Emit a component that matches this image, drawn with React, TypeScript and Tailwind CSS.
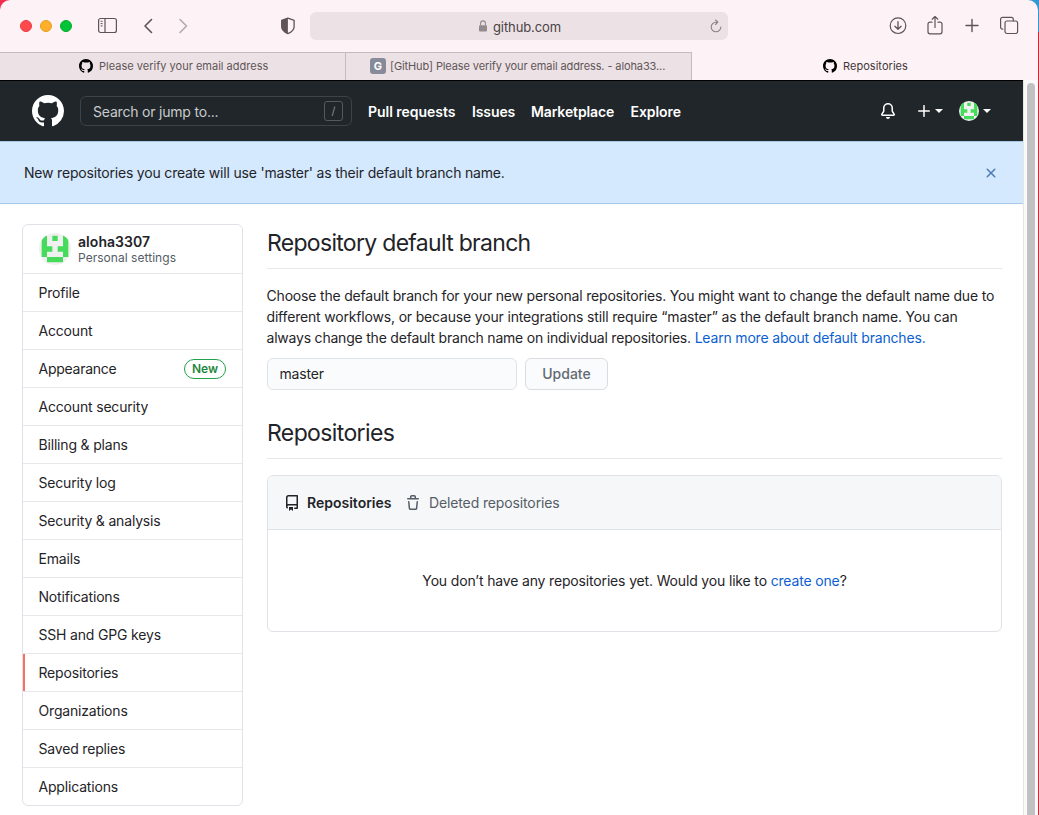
import React from "react";

const MARK =
  "M8 0C3.58 0 0 3.58 0 8c0 3.54 2.29 6.53 5.47 7.59.4.07.55-.17.55-.38 0-.19-.01-.82-.01-1.49-2.01.37-2.53-.49-2.69-.94-.09-.23-.48-.94-.82-1.13-.28-.15-.68-.52-.01-.53.63-.01 1.08.58 1.23.82.72 1.21 1.87.87 2.33.66.07-.52.28-.87.51-1.07-1.78-.2-3.64-.89-3.64-3.95 0-.87.31-1.59.82-2.15-.08-.2-.36-1.02.08-2.12 0 0 .67-.21 2.2.82.64-.18 1.32-.27 2-.27.68 0 1.36.09 2 .27 1.53-1.04 2.2-.82 2.2-.82.44 1.1.16 1.92.08 2.12.51.56.82 1.27.82 2.15 0 3.07-1.87 3.75-3.65 3.95.29.25.54.73.54 1.48 0 1.07-.01 1.93-.01 2.2 0 .21.15.46.55.38A8.013 8.013 0 0016 8c0-4.42-3.58-8-8-8z";
const BELL =
  "M8 16a2 2 0 001.985-1.75c.017-.137-.097-.25-.235-.25h-3.5c-.138 0-.252.113-.235.25A2 2 0 008 16zM8 1.5A3.5 3.5 0 004.5 5v2.947c0 .346-.102.683-.294.97l-1.703 2.556a.018.018 0 00-.003.01l.001.006c0 .002.002.004.004.006a.017.017 0 00.006.004l.007.001h10.964l.007-.001a.016.016 0 00.006-.004.016.016 0 00.004-.006l.001-.007a.017.017 0 00-.003-.01l-1.703-2.554a1.75 1.75 0 01-.294-.97V5A3.5 3.5 0 008 1.5zM3 5a5 5 0 0110 0v2.947c0 .05.015.098.042.139l1.703 2.555A1.518 1.518 0 0113.482 13H2.518a1.518 1.518 0 01-1.263-2.36l1.703-2.554A.25.25 0 003 7.947V5z";
const REPO =
  "M2 2.5A2.5 2.5 0 014.5 0h8.75a.75.75 0 01.75.75v12.5a.75.75 0 01-.75.75h-2.5a.75.75 0 110-1.5h1.75v-2h-8a1 1 0 00-.714 1.7.75.75 0 01-1.072 1.05A2.495 2.495 0 012 11.5v-9zm10.5-1V9h-8c-.356 0-.694.074-1 .208V2.5a1 1 0 011-1h8zM5 12.25v3.25a.25.25 0 00.4.2l1.45-1.087a.25.25 0 01.3 0L8.6 15.7a.25.25 0 00.4-.2v-3.25a.25.25 0 00-.25-.25h-3.5a.25.25 0 00-.25.25z";
const TRASH =
  "M6.5 1.75a.25.25 0 01.25-.25h2.5a.25.25 0 01.25.25V3h-3V1.75zm4.5 0V3h2.25a.75.75 0 010 1.5H2.75a.75.75 0 010-1.5H5V1.75C5 .784 5.784 0 6.75 0h2.5C10.216 0 11 .784 11 1.75zM4.496 6.675a.75.75 0 10-1.492.15l.66 6.6A1.75 1.75 0 005.405 15h5.19c.9 0 1.652-.681 1.741-1.576l.66-6.6a.75.75 0 00-1.492-.149l-.66 6.6a.25.25 0 01-.249.225h-5.19a.25.25 0 01-.249-.225l-.66-6.6z";
const CLOSE =
  "M3.72 3.72a.75.75 0 011.06 0L8 6.94l3.22-3.22a.75.75 0 111.06 1.06L9.06 8l3.22 3.22a.75.75 0 11-1.06 1.06L8 9.06l-3.22 3.22a.75.75 0 01-1.06-1.06L6.94 8 3.72 4.78a.75.75 0 010-1.06z";

function Octicon({ d, className }: { d: string; className: string }) {
  return (
    <svg viewBox="0 0 16 16" fill="currentColor" fillRule="evenodd" className={"shrink-0 " + className}>
      <path d={d} />
    </svg>
  );
}

function LineIcon({ size, className, children }: { size: number; className: string; children: React.ReactNode }) {
  return (
    <svg
      viewBox={`0 0 ${size} ${size}`}
      width={size}
      height={size}
      fill="none"
      stroke="currentColor"
      strokeLinecap="round"
      strokeLinejoin="round"
      className={"shrink-0 " + className}
    >
      {children}
    </svg>
  );
}

function Identicon({ className }: { className: string }) {
  return (
    <svg viewBox="0 0 12 12" className={"shrink-0 rounded-full bg-[#f0f0f0] " + className}>
      <path fill="#46db5b" d="M1 1h2v4h2v2h-2v2h-2zM5 1h2v2h-2zM9 1h2v8h-2v-2h-2v-2h2zM3 9h6v2h-6z" />
    </svg>
  );
}

function Caret() {
  return (
    <svg viewBox="0 0 8 4" className="h-1 w-2 shrink-0 text-white" fill="currentColor">
      <path d="M0 0h8L4 4z" />
    </svg>
  );
}

function Toolbar() {
  return (
    <div className="flex h-[52px] shrink-0 items-center text-[#5f5357]">
      <div className="flex w-[78px] shrink-0 gap-2 pl-5">
        <span className="size-3 rounded-full border border-[#e53d42] bg-[#fe4a4d]" />
        <span className="size-3 rounded-full border border-[#e59c22] bg-[#feb02c]" />
        <span className="size-3 rounded-full border border-[#00ad2c] bg-[#00c438]" />
      </div>
      <LineIcon size={20} className="ml-[19px]">
        <rect x="1.6" y="2.5" width="17.8" height="14" rx="2" strokeWidth="1.2" />
        <path d="M8 2.5v14" strokeWidth="1.2" />
        <path d="M4 5.3h1.200M4 7.600h1.200M4 9.900h1.200" strokeWidth="1" />
      </LineIcon>
      <LineIcon size={20} className="ml-[22px]">
        <path d="M12.500 3.500L6 10l6.500 6.500" strokeWidth="1.600" />
      </LineIcon>
      <LineIcon size={20} className="ml-[14px] text-[#b5a9ad]">
        <path d="M7 3.500l6.500 6.500L7 16.500" strokeWidth="1.600" />
      </LineIcon>
      <LineIcon size={20} className="ml-[85px]">
        <path d="M9.900 2.200l6.200 2.100v6.500c0 3.200-2.700 5.300-6.200 6.900-3.500-1.600-6.200-3.700-6.200-6.900V4.300z" strokeWidth="1.300" />
        <path d="M9.900 2.200v15.500c-3.500-1.600-6.200-3.700-6.200-6.900V4.300z" fill="currentColor" stroke="none" />
      </LineIcon>
      <div className="ml-3 flex h-7 w-[418px] shrink-0 items-center rounded-md bg-[#ece2e5]">
        <svg viewBox="0 0 10 12" className="ml-[168px] h-3 w-[10px] shrink-0 text-[#938a8d]">
          <rect x="1" y="5.200" width="8" height="6.300" rx="1" fill="currentColor" />
          <path d="M2.600 5.500V3.300a2.400 2.400 0 014.800 0v2.200" fill="none" stroke="currentColor" strokeWidth="1.100" />
        </svg>
        <span className="ml-[5px] pt-px text-[13px] tracking-[-0.1px] text-[#4a4144]">github.com</span>
        <LineIcon size={14} className="mr-[5px] ml-auto text-[#8b8185]">
          <path d="M8.600 3.200H7A4.800 4.800 0 1011.800 8M6.500 1l2.400 2.200-2.400 2.300" strokeWidth="1.100" />
        </LineIcon>
      </div>
      <LineIcon size={20} className="mr-[17px] ml-auto">
        <circle cx="10" cy="9.700" r="7.800" strokeWidth="1.200" />
        <path d="M10 5.700v7.500M6.900 10.300l3.100 3 3.100-3" strokeWidth="1.300" />
      </LineIcon>
      <LineIcon size={20} className="mr-[17px]">
        <path d="M7 6.200H5a2 2 0 00-2 2v7.600a2 2 0 002 2h10a2 2 0 002-2V8.200a2 2 0 00-2-2h-2M10 11.500V.600M7.200 3.200L10 .500l2.800 2.700" strokeWidth="1.200" />
      </LineIcon>
      <LineIcon size={20} className="mr-[17px]">
        <path d="M10 3.500v12M4 9.500h12" strokeWidth="1.400" />
      </LineIcon>
      <LineIcon size={20} className="mr-[19px]">
        <rect x="6" y="5" width="12.600" height="12.500" rx="2" strokeWidth="1.200" />
        <path d="M3.800 13.200H3.600a2 2 0 01-2-2V3.300a2 2 0 012-2h8.700a2 2 0 012 2v1.500" strokeWidth="1.200" />
      </LineIcon>
    </div>
  );
}

function TabStrip() {
  return (
    <div className="flex h-[28px] shrink-0 text-[11px] leading-[13px] text-[#5f5558]">
      <div className="flex w-[346px] items-center border-t border-r border-[#c5bbbe] bg-[#ece2e5] pb-px pl-[79px]">
        <Octicon d={MARK} className="mr-[6px] size-[14px] text-black" />
        <span className="pt-px tracking-[0.01px]">Please verify your email address</span>
      </div>
      <div className="flex w-[346px] items-center border-t border-r border-[#c5bbbe] bg-[#ece2e5] pb-px pl-6">
        <span className="mr-1 flex size-4 items-center justify-center rounded-[3px] bg-[#878a99] text-[11px] font-bold text-white">
          G
        </span>
        <span className="pt-px tracking-[-0.11px]">[GitHub] Please verify your email address. - aloha33...</span>
      </div>
      <div className="flex flex-1 items-center pl-[131px] text-[#40373a]">
        <Octicon d={MARK} className="mr-[6px] size-[14px] text-black" />
        <span className="tracking-[0.04px]">Repositories</span>
      </div>
    </div>
  );
}

function SiteHeader() {
  return (
    <header className="flex h-[61px] shrink-0 items-center border-t border-black bg-[#20262a] pr-8 pl-8 text-[14px] font-semibold text-white">
      <Octicon d={MARK} className="size-8" />
      <div className="ml-4 flex h-[30px] w-[272px] items-center justify-between rounded-md border border-[#3c444b] pr-[8px] pl-3 font-normal text-[#c9cbcd]">
        <span className="pt-[2px] tracking-[-0.2px]">Search or jump to...</span>
        <span className="flex h-5 w-[19px] items-center justify-center rounded-[3px] border border-[#54595e] text-[11px] text-[#8a8f93]">
          /
        </span>
      </div>
      <nav className="ml-4 flex pt-[2px]">
        <a className="w-[104px] tracking-[-0.03px]">Pull requests</a>
        <a className="w-[59px] tracking-[-0.1px]">Issues</a>
        <a className="w-[99px] tracking-[-0.12px]">Marketplace</a>
        <a className="pl-[0.500px] tracking-[-0.080px]">Explore</a>
      </nav>
      <Octicon d={BELL} className="mr-[22px] ml-auto size-4" />
      <svg
        viewBox="0 0 12 12"
        className="mr-[5px] size-3 shrink-0"
        stroke="currentColor"
        strokeWidth="1.500"
        strokeLinecap="round"
      >
        <path d="M6 .700v10.600M.700 6h10.600" />
      </svg>
      <Caret />
      <Identicon className="mr-1 ml-4 size-5" />
      <Caret />
    </header>
  );
}

const MENU = [
  "Profile",
  "Account",
  "Appearance",
  "Account security",
  "Billing & plans",
  "Security log",
  "Security & analysis",
  "Emails",
  "Notifications",
  "SSH and GPG keys",
  "Repositories",
  "Organizations",
  "Saved replies",
  "Applications",
];

function Sidebar() {
  return (
    <aside className="h-[582px] w-[221px] shrink-0 overflow-hidden rounded-md border border-[#dfe2e7]">
      <div className="flex h-[48px] items-center pl-4">
        <Identicon className="size-8" />
        <div className="ml-[7px]">
          <div className="-mt-px pb-px text-[14px] leading-[17px] font-semibold tracking-[0.05px]">aloha3307</div>
          <div className="text-[12px] leading-[14px] tracking-[0.04px] text-[#555d66]">Personal settings</div>
        </div>
      </div>
      {MENU.map((item) => (
        <div
          key={item}
          className={
            "flex h-[38px] items-center justify-between border-t border-[#e6e8ec] pr-4 pl-[15.5px] " +
            (item === "Repositories"
              ? "bg-[linear-gradient(#fb6f60,#fb6f60)] bg-[length:2px_100%] bg-no-repeat"
              : "")
          }
        >
          <span className={item === "Appearance" ? "tracking-[-0.25px]" : "tracking-[-0.18px]"}>{item}</span>
          {item === "Appearance" && (
            <span className="flex h-5 w-[42px] items-center justify-center rounded-full border border-[#22a04b] text-[12px] font-semibold tracking-normal text-[#1f883d]">
              New
            </span>
          )}
        </div>
      ))}
    </aside>
  );
}

function Main() {
  return (
    <main className="ml-6 w-[735px] shrink-0">
      <h2 className="h-[45px] border-b border-[#e6e8ec] text-[23px] leading-[39px] tracking-[-0.7px]">
        Repository default branch
      </h2>
      <p className="mt-4 -ml-[0.500px] h-[63px] leading-[21px] whitespace-nowrap">
        <span className="tracking-[-0.185px]">
          Choose the default branch for your new personal repositories. You might want to change the default name due to
        </span>
        <br />
        <span className="tracking-[-0.175px]">
          different workflows, or because your integrations still require “master” as the default branch name. You can
        </span>
        <br />
        <span className="tracking-[-0.210px]">
          always change the default branch name on individual repositories.{" "}
          <a className="tracking-[-0.180px] text-[#0b5ed0]">Learn more about default branches.</a>
        </span>
      </p>
      <div className="mt-[10px] flex gap-2">
        <div className="flex h-8 w-[250px] items-center rounded-md border border-[#dfe2e7] bg-[#fafbfc] pl-[11.5px]">
          master
        </div>
        <div className="flex h-8 w-[83px] items-center justify-center rounded-md border border-[#dadcdf] bg-[#fafbfc] font-medium tracking-normal text-[#626a72]">
          Update
        </div>
      </div>
      <h2 className="mt-6 h-[45px] border-b border-[#e6e8ec] text-[23px] leading-[39px] tracking-[-0.62px]">
        Repositories
      </h2>
      <div className="mt-4 h-[157px] overflow-hidden rounded-md border border-[#dfe2e7]">
        <div className="flex h-[54px] items-center border-b border-[#dfe2e7] bg-[#f5f7f9] pl-4">
          <Octicon d={REPO} className="size-4" />
          <span className="ml-[7px] w-[84px] font-semibold tracking-normal">Repositories</span>
          <Octicon d={TRASH} className="ml-[14px] size-4 text-[#555d66]" />
          <span className="ml-2 tracking-[-0.130px] text-[#555d66]">Deleted repositories</span>
        </div>
        <div className="flex h-[102px] items-center justify-center">
          <span className="tracking-[-0.160px]">
            You don’t have any repositories yet. Would you like to <a className="text-[#0b5ed0]">create one</a>?
          </span>
        </div>
      </div>
    </main>
  );
}

export default function App() {
  return (
    <div className="h-[815px] w-[1039px] overflow-hidden bg-[linear-gradient(90deg,#f52c50_50%,transparent_50%),linear-gradient(#3297d3_32px,#c82c3c_32px)] pr-[1px] font-['Inter','Liberation_Sans',sans-serif] text-[14px] leading-5 text-[#1f2428]">
      <div className="flex h-full flex-col overflow-hidden rounded-t-[10px] bg-[#fdf2f5]">
        <Toolbar />
        <TabStrip />
        <div className="flex flex-1 bg-white">
          <div className="w-[1023px] shrink-0 tracking-[-0.18px]">
            <SiteHeader />
            <div className="flex h-[63px] items-center justify-between border-t border-b border-[#a9c9ec] bg-[#d4e8fe] px-6">
              <span className="tracking-[-0.185px]">
                New repositories you create will use 'master' as their default branch name.
              </span>
              <Octicon d={CLOSE} className="size-4 text-[#4b7bb5]" />
            </div>
            <div className="flex pt-5 pl-[22px]">
              <Sidebar />
              <Main />
            </div>
          </div>
          <div className="flex flex-1 justify-center border-l border-[#e5e5e5] bg-[#f9f9f9] pt-[3px]">
            <div className="h-[760px] w-2 rounded-full bg-[#c1c1c1]" />
          </div>
        </div>
      </div>
    </div>
  );
}
